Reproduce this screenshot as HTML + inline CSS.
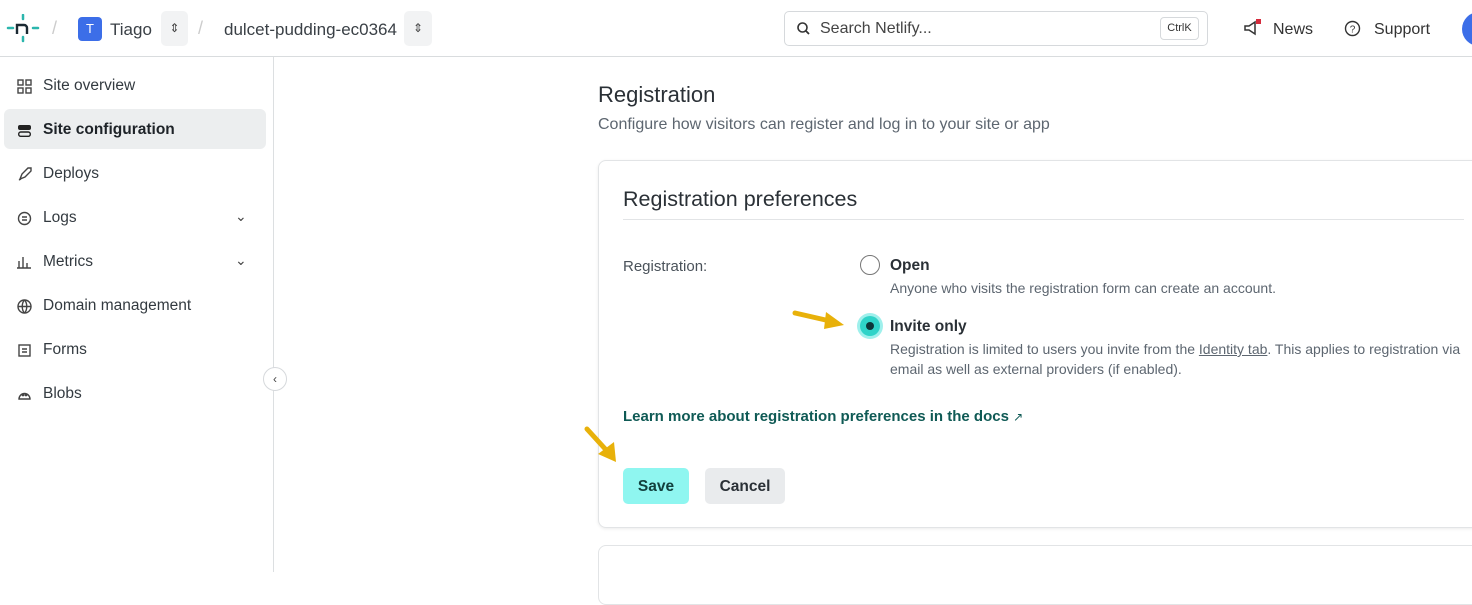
<!DOCTYPE html>
<html><head><style>
*{box-sizing:border-box;margin:0;padding:0}
body{width:1472px;height:572px;overflow:hidden;background:#fff;font-family:"Liberation Sans",sans-serif;color:#2e3338;position:relative}
.abs{position:absolute;white-space:nowrap}
.hdr{position:absolute;left:0;top:0;width:1472px;height:57px;border-bottom:1px solid #d9dcde}
.side{position:absolute;left:273px;top:57px;width:1px;height:515px;background:#dcdfe1}
.nav{position:absolute;left:16px;font-size:15.5px;color:#333a40;display:flex;align-items:center;gap:10px}
.nav svg{width:17px;height:17px}
.card{position:absolute;left:598px;top:160px;width:900px;height:368px;border:1px solid #e2e4e6;border-radius:8px;box-shadow:0 1px 3px rgba(0,0,0,.08)}
.desc{font-size:14px;color:#5d6670}
</style></head><body>
<div class="hdr"></div>
<svg class="abs" style="left:6px;top:14px" width="34" height="30" viewBox="0 0 34 30"><g stroke="#2bb6ad" stroke-width="2.5" stroke-linecap="round"><line x1="2" y1="14" x2="7" y2="14"/><line x1="27" y1="14" x2="32" y2="14"/><line x1="17" y1="1" x2="17" y2="5"/><line x1="17" y1="23" x2="17" y2="27"/></g><path d="M11 20V11h7a3 3 0 0 1 3 3v6" fill="none" stroke="#1b2a33" stroke-width="2.4"/></svg>
<div class="abs" style="left:52px;top:18px;color:#ccc;font-size:18px">/</div>
<div class="abs" style="left:78px;top:17px;width:24px;height:24px;border-radius:4px;background:#3c6ee8;color:#fff;font-size:13px;text-align:center;line-height:24px">T</div>
<div class="abs" style="left:110px;top:20px;font-size:17px;color:#3a4046">Tiago</div>
<div class="abs" style="left:161px;top:11px;width:27px;height:35px;border-radius:5px;background:#f2f3f4;color:#444;font-size:12px;text-align:center;line-height:35px">⇕</div>
<div class="abs" style="left:198px;top:18px;color:#ccc;font-size:18px">/</div>
<div class="abs" style="left:224px;top:20px;font-size:17px;color:#3a4046">dulcet-pudding-ec0364</div>
<div class="abs" style="left:404px;top:11px;width:28px;height:35px;border-radius:5px;background:#f2f3f4;color:#444;font-size:12px;text-align:center;line-height:35px">⇕</div>
<div class="abs" style="left:784px;top:11px;width:424px;height:35px;border:1px solid #d6d9dc;border-radius:5px"></div>
<svg class="abs" style="left:796px;top:21px" width="16" height="16" viewBox="0 0 16 16"><circle cx="6.5" cy="6.5" r="4.5" fill="none" stroke="#333" stroke-width="1.6"/><line x1="10" y1="10" x2="13" y2="13" stroke="#333" stroke-width="1.8"/></svg>
<div class="abs" style="left:820px;top:20px;font-size:16px;color:#444">Search Netlify...</div>
<div class="abs" style="left:1160px;top:17px;width:39px;height:23px;border:1px solid #d6d9dc;border-radius:4px;font-size:11px;text-align:center;line-height:21px;color:#333">Ctrl<span>K</span></div>
<svg class="abs" style="left:1242px;top:18px" width="22" height="20" viewBox="0 0 22 20"><path d="M3 8h4l6-4v12l-6-4H3z" fill="none" stroke="#333" stroke-width="1.5"/><rect x="14" y="1" width="5" height="5" fill="#d52b3c"/></svg>
<div class="abs" style="left:1273px;top:21px;font-size:16px;color:#333">News</div>
<svg class="abs" style="left:1344px;top:20px" width="17" height="17" viewBox="0 0 17 17"><circle cx="8.5" cy="8.5" r="7" fill="none" stroke="#333" stroke-width="1.4"/><text x="8.5" y="12.5" font-size="10" text-anchor="middle" fill="#333" font-family="Liberation Sans">?</text></svg>
<div class="abs" style="left:1374px;top:21px;font-size:16px;color:#333">Support</div>
<div class="abs" style="left:1462px;top:12px;width:34px;height:34px;border-radius:50%;background:#3c6ee8"></div>

<div class="side"></div>
<div class="abs" style="left:4px;top:109px;width:262px;height:40px;border-radius:6px;background:#eceeef"></div>
<div class="nav" style="top:77px"><svg viewBox="0 0 17 17" fill="none" stroke="#444" stroke-width="1.4"><rect x="2" y="2" width="5" height="5"/><rect x="10" y="2" width="5" height="5"/><rect x="2" y="10" width="5" height="5"/><rect x="10" y="10" width="5" height="5"/></svg>Site overview</div>
<div class="nav" style="top:121px;font-weight:bold;color:#1e2328"><svg viewBox="0 0 17 17"><rect x="2" y="3" width="13" height="5" rx="2" fill="#222"/><rect x="2.7" y="10" width="11.6" height="4.3" rx="2" fill="none" stroke="#222" stroke-width="1.4"/></svg>Site configuration</div>
<div class="nav" style="top:165px"><svg viewBox="0 0 17 17" fill="none" stroke="#444" stroke-width="1.4"><path d="M4 13l2-5 6-6h3v3l-6 6z M3 14l2-1"/></svg>Deploys</div>
<div class="nav" style="top:209px"><svg viewBox="0 0 17 17" fill="none" stroke="#444" stroke-width="1.4"><circle cx="8.5" cy="8.5" r="6"/><path d="M6 7h5M6 10h5"/></svg>Logs</div>
<div class="nav" style="top:253px"><svg viewBox="0 0 17 17" fill="none" stroke="#444" stroke-width="1.4"><path d="M3 14V7M7 14V3M11 14V9M15 14H1"/></svg>Metrics</div>
<div class="nav" style="top:297px"><svg viewBox="0 0 17 17" fill="none" stroke="#444" stroke-width="1.4"><circle cx="8.5" cy="8.5" r="6.5"/><path d="M2 8.5h13M8.5 2c3 3 3 10 0 13M8.5 2c-3 3-3 10 0 13"/></svg>Domain management</div>
<div class="nav" style="top:341px"><svg viewBox="0 0 17 17" fill="none" stroke="#444" stroke-width="1.4"><rect x="3" y="3" width="11" height="11"/><path d="M6 7h5M6 10h5"/></svg>Forms</div>
<div class="nav" style="top:385px"><svg viewBox="0 0 17 17" fill="none" stroke="#444" stroke-width="1.4"><path d="M3 13a5.5 5.5 0 1 1 11 0z"/><circle cx="7" cy="9" r=".7"/><circle cx="10" cy="9" r=".7"/></svg>Blobs</div>
<div class="abs" style="left:235px;top:208px;font-size:14px;color:#444">⌄</div>
<div class="abs" style="left:235px;top:252px;font-size:14px;color:#444">⌄</div>
<div class="abs" style="left:263px;top:367px;width:24px;height:24px;border-radius:50%;border:1px solid #d6d9dc;background:#fff;font-size:12px;text-align:center;line-height:22px;color:#444">‹</div>

<div class="abs" style="left:598px;top:82px;font-size:22px;color:#2a3036">Registration</div>
<div class="abs" style="left:598px;top:116px;font-size:16px;color:#5d6670">Configure how visitors can register and log in to your site or app</div>
<div class="card"></div>
<div class="abs" style="left:623px;top:187px;font-size:21.5px;color:#2a3036">Registration preferences</div>
<div class="abs" style="left:623px;top:219px;width:841px;height:1px;background:#e2e4e6"></div>
<div class="abs" style="left:623px;top:258px;font-size:15px;color:#4a525a">Registration:</div>
<div class="abs" style="left:860px;top:255px;width:20px;height:20px;border-radius:50%;border:1.5px solid #777"></div>
<div class="abs" style="left:890px;top:257px;font-size:15.5px;font-weight:bold;color:#2a3036">Open</div>
<div class="abs desc" style="left:890px;top:280px">Anyone who visits the registration form can create an account.</div>
<div class="abs" style="left:857px;top:313px;width:26px;height:26px;border-radius:50%;background:#9ff0ec"></div>
<div class="abs" style="left:860px;top:316px;width:20px;height:20px;border-radius:50%;background:#2fd3c8"></div>
<div class="abs" style="left:866px;top:322px;width:8px;height:8px;border-radius:50%;background:#0d3538"></div>
<div class="abs" style="left:890px;top:318px;font-size:15.5px;font-weight:bold;color:#2a3036">Invite only</div>
<div class="abs desc" style="left:890px;top:341px">Registration is limited to users you invite from the <u>Identity tab</u>. This applies to registration via</div>
<div class="abs desc" style="left:890px;top:361px">email as well as external providers (if enabled).</div>
<svg class="abs" style="left:792px;top:305px" width="60" height="30" viewBox="0 0 60 30"><path d="M3 8 L38 16" stroke="#e8b10a" stroke-width="5" stroke-linecap="round"/><path d="M34 7 L52 20 L32 24z" fill="#e8b10a"/></svg>
<svg class="abs" style="left:582px;top:424px" width="40" height="42" viewBox="0 0 40 42"><path d="M5 5 L26 28" stroke="#e8b10a" stroke-width="5" stroke-linecap="round"/><path d="M16 30 L34 38 L32 18z" fill="#e8b10a"/></svg>
<div class="abs" style="left:623px;top:408px;font-size:15px;font-weight:bold;color:#0f5a55">Learn more about registration preferences in the docs <span style="font-weight:normal;font-size:12px">↗</span></div>
<div class="abs" style="left:623px;top:468px;width:66px;height:36px;border-radius:5px;background:#8ff6f0;font-size:15.5px;font-weight:bold;color:#12403d;text-align:center;line-height:38px">Save</div>
<div class="abs" style="left:705px;top:468px;width:80px;height:36px;border-radius:5px;background:#e9ebed;font-size:15.5px;font-weight:bold;color:#2a3036;text-align:center;line-height:38px">Cancel</div>
<div class="abs" style="left:598px;top:545px;width:900px;height:60px;border:1px solid #e2e4e6;border-radius:8px"></div>
</body></html>
